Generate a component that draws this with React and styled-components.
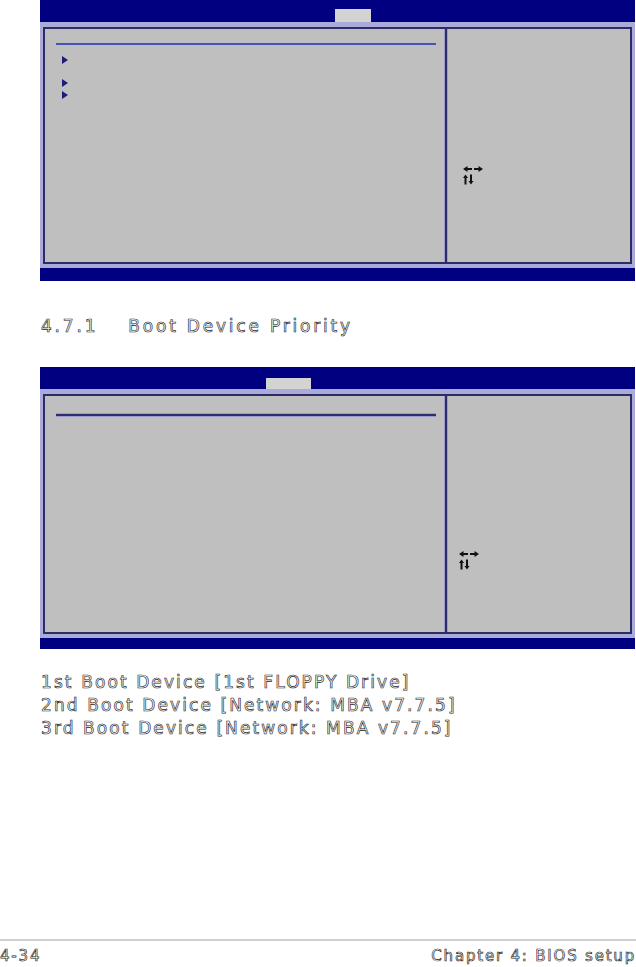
import React from 'react';
import styled, { createGlobalStyle } from 'styled-components';

const Global = createGlobalStyle`
  *, *::before, *::after { box-sizing: border-box; }
  html, body { margin: 0; padding: 0; background: #fff; }
  body { width: 636px; height: 967px; overflow: hidden; font-family: "DejaVu Sans", sans-serif; }
`;

const Page = styled.div`
  position: relative;
  width: 636px;
  height: 967px;
  display: flex;
  flex-direction: column;
`;

const Screen = styled.div`
  width: 595px;
  margin: ${p => p.$mt}px 0 0 40px;
  display: flex;
  flex-direction: column;
  background: #ababd9;
`;

const TopBar = styled.div`
  height: 22px;
  background: #000080;
  display: flex;
  align-items: flex-end;
`;

const Tab = styled.div`
  width: ${p => p.$w}px;
  height: ${p => p.$h}px;
  margin-left: ${p => p.$x}px;
  background: #d3d3d3;
`;

const Frame = styled.div`
  padding: ${p => p.$pt}px 3px 4px 3px;
`;

const Inner = styled.div`
  height: ${p => p.$h}px;
  border: 2px solid #2c2c66;
  background: #bfbfbf;
  display: grid;
  grid-template-columns: 400px 2px 1fr;
`;

const LeftPane = styled.div`
  padding: ${p => p.$lineTop}px 8px 0 11px;
  display: flex;
  flex-direction: column;
`;

const Rule = styled.div`
  width: ${p => p.$w}px;
  height: 2px;
  background: ${p => (p.$dark ? '#2e2e6e' : '#4554b4')};
  box-shadow: ${p => (p.$dark ? '0 1px 0 #9a9ad0, 0 -1px 0 #9a9ad0' : 'none')};
`;

const Divider = styled.div`
  background: #2c2c66;
  box-shadow: 1px 0 0 #9c9cce, -1px 0 0 #9c9cce;
`;

const Arrow = styled.div`
  width: 0;
  height: 0;
  margin-left: 6px;
  margin-top: ${p => p.$mt}px;
  border-top: 4px solid transparent;
  border-bottom: 4px solid transparent;
  border-left: 6px solid #1c1c7c;
`;

const RightPane = styled.div`
  padding: ${p => p.$top}px 0 0 ${p => p.$left}px;
`;

const BottomBar = styled.div`
  height: ${p => p.$h}px;
  background: #000080;
`;

const Outlined = styled.div`
  color: #ffffff;
  -webkit-text-stroke: 0.65px #262626;
  font-family: "DejaVu Sans", "Liberation Sans", sans-serif;
  white-space: pre;
`;

const Heading = styled(Outlined)`
  margin: 35px 0 0 41px;
  font-size: 17px;
  line-height: 20px;
  letter-spacing: 2.8px;
  display: flex;
`;

const Num = styled.span`
  margin-right: 30px;
`;

const Settings = styled(Outlined)`
  margin: 22px 0 0 41px;
  font-size: 17px;
  letter-spacing: 2.1px;
  line-height: 23px;
`;

const Footer = styled.div`
  margin-top: auto;
  margin-bottom: 3px;
  border-top: 2px solid #d0d0d0;
  padding-top: 7px;
  display: flex;
  justify-content: space-between;
  align-items: baseline;
`;

const FootText = styled(Outlined)`
  font-size: 15px;
  line-height: 16px;
  letter-spacing: 1.8px;
`;

function NavKeys() {
  return (
    <svg width="21" height="19" viewBox="0 0 21 19">
      <g fill="#111">
        <path d="M0 3 L4.5 0 V2 H9 V4 H4.5 V6 Z" />
        <path d="M20 3 L15.5 0 V2 H11 V4 H15.5 V6 Z" />
        <path d="M2.5 8.5 L0 12 H1.5 V18.5 H3.5 V12 H5 Z" />
        <path d="M8 18.5 L5.5 15 H7 V8.5 H9 V15 H10.5 Z" />
      </g>
    </svg>
  );
}

function BiosScreen({ mt, tab, framePt, innerH, lineTop, ruleW, darkRule, arrows, keysTop, keysLeft, bottomH }) {
  return (
    <Screen $mt={mt}>
      <TopBar>
        <Tab $x={tab.x} $w={tab.w} $h={tab.h} />
      </TopBar>
      <Frame $pt={framePt}>
        <Inner $h={innerH}>
          <LeftPane $lineTop={lineTop}>
            <Rule $w={ruleW} $dark={darkRule} />
            {arrows.map((a, i) => (
              <Arrow key={i} $mt={a} />
            ))}
          </LeftPane>
          <Divider />
          <RightPane $top={keysTop} $left={keysLeft}>
            <NavKeys />
          </RightPane>
        </Inner>
      </Frame>
      <BottomBar $h={bottomH} />
    </Screen>
  );
}

export default function App() {
  return (
    <Page>
      <Global />
      <BiosScreen
        mt={0}
        tab={{ x: 295, w: 36, h: 13 }}
        framePt={5}
        innerH={237}
        lineTop={14}
        ruleW={380}
        darkRule={false}
        arrows={[11, 15, 4]}
        keysTop={137}
        keysLeft={16}
        bottomH={13}
      />
      <Heading>
        <Num>4.7.1</Num>
        <span>Boot Device Priority</span>
      </Heading>
      <BiosScreen
        mt={31}
        tab={{ x: 226, w: 45, h: 11 }}
        framePt={5}
        innerH={240}
        lineTop={18}
        ruleW={380}
        darkRule={true}
        arrows={[]}
        keysTop={155}
        keysLeft={12}
        bottomH={11}
      />
      <Settings>
        <div>1st Boot Device [1st FLOPPY Drive]</div>
        <div>2nd Boot Device [Network: MBA v7.7.5]</div>
        <div>3rd Boot Device [Network: MBA v7.7.5]</div>
      </Settings>
      <Footer>
        <FootText>4-34</FootText>
        <FootText>Chapter 4: BIOS setup</FootText>
      </Footer>
    </Page>
  );
}
